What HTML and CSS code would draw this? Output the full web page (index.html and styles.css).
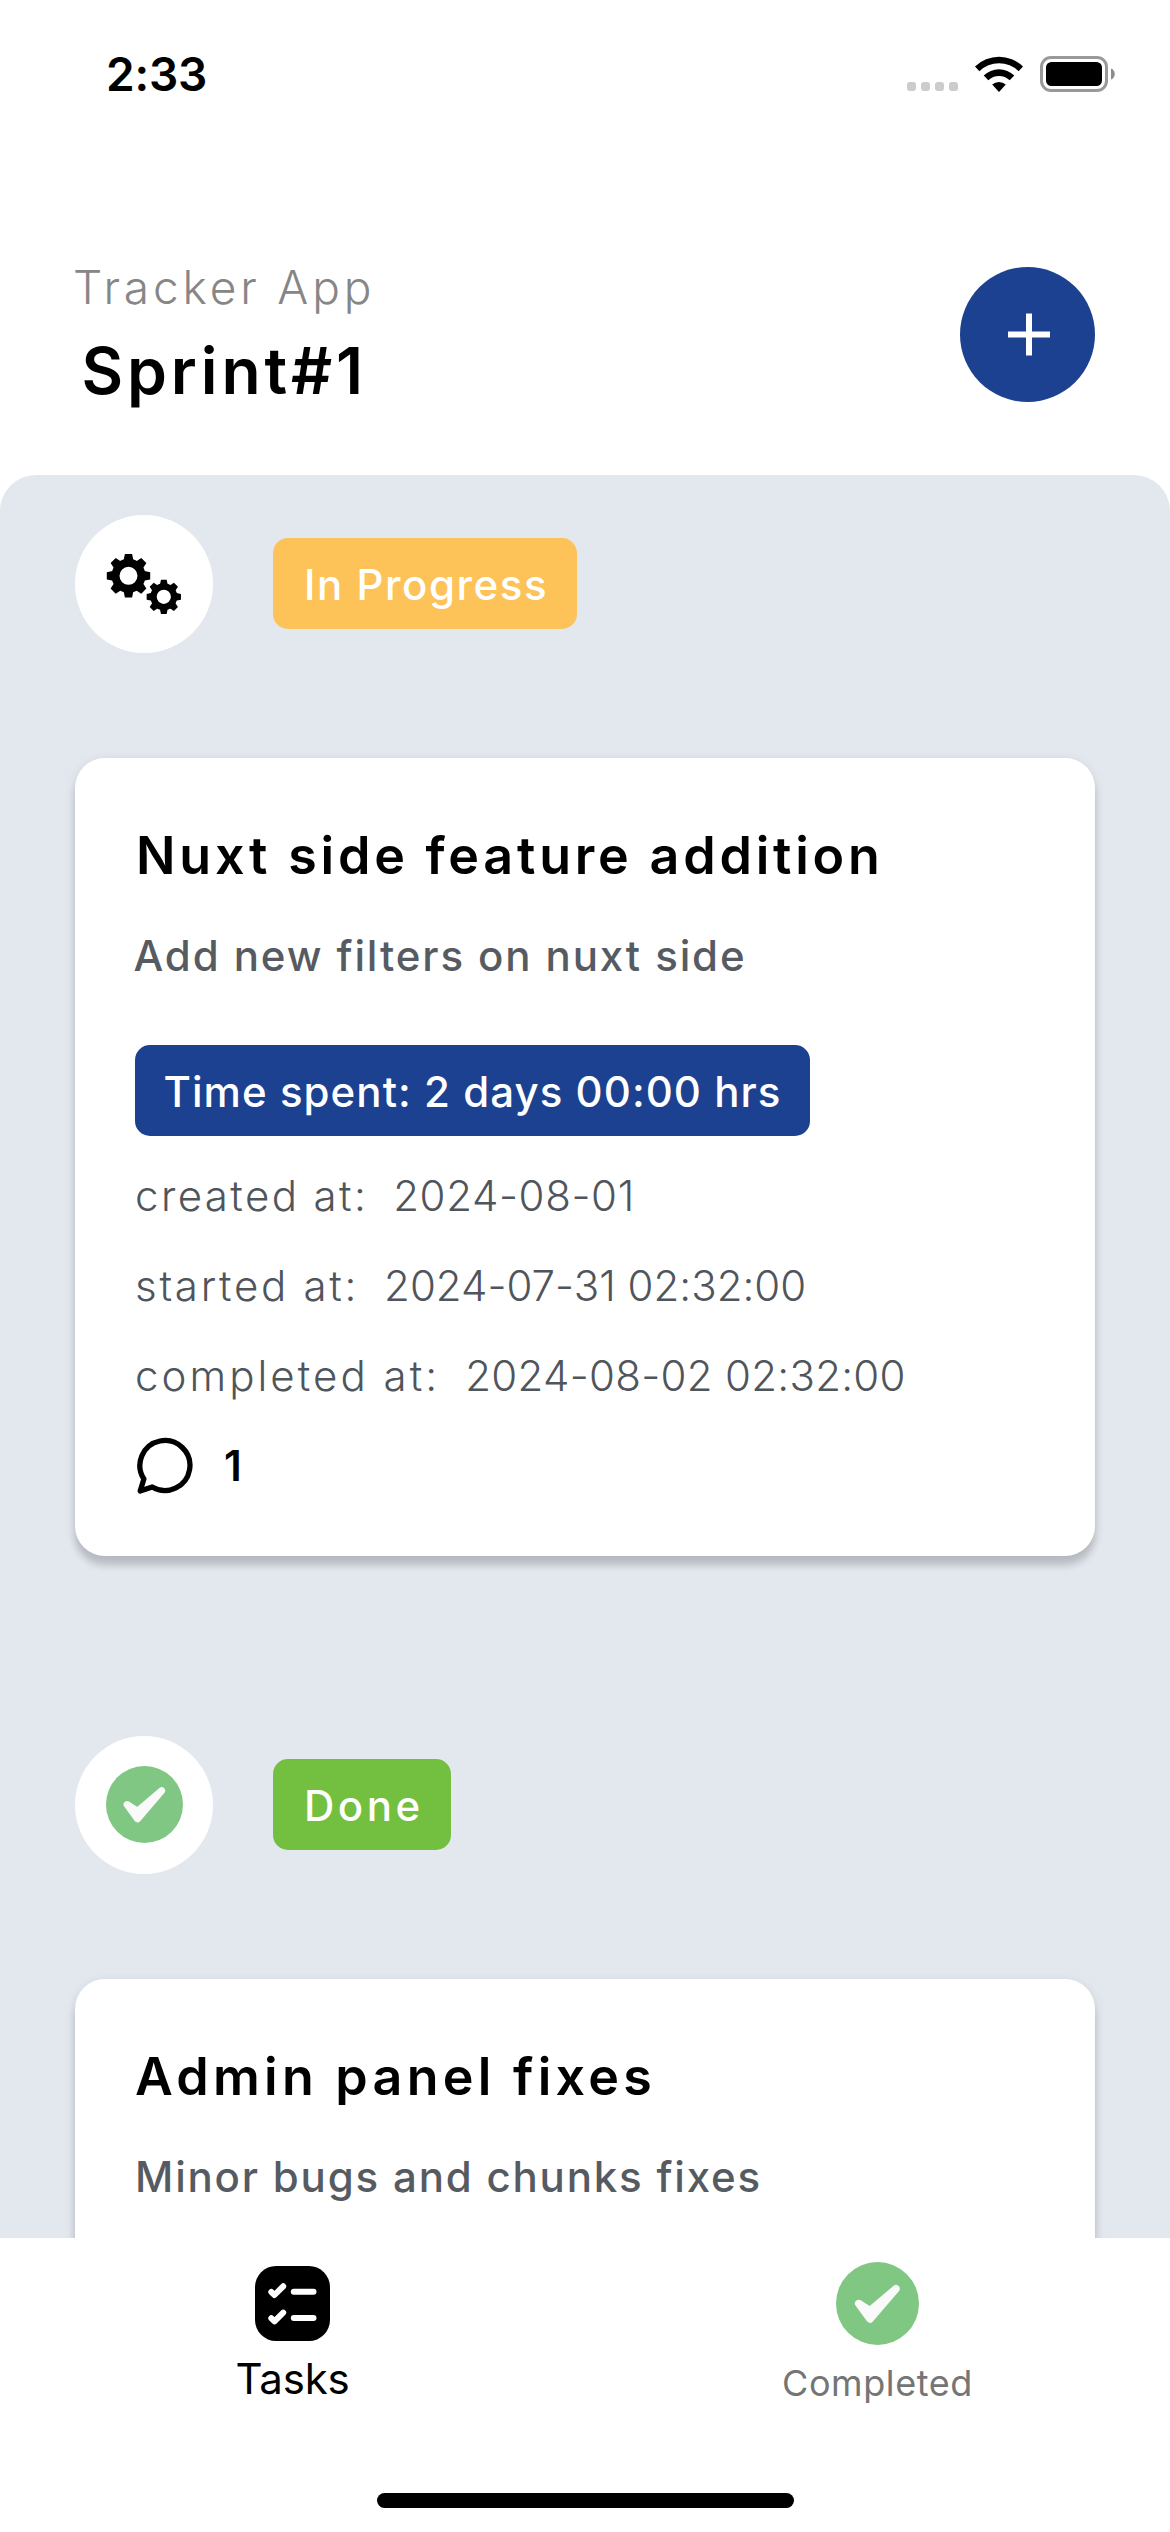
FILE: index.html
```html
<!DOCTYPE html>
<html lang="en">
<head>
<meta charset="utf-8">
<title>Tracker App</title>
<link rel="stylesheet" href="styles.css">
</head>
<body>
<div class="status">
  <span class="status-time">2:33</span>
  <div class="status-icons">
    <div class="dots"><i></i><i></i><i></i><i></i></div>
    <svg class="wifi" viewBox="0 0 48 36">
      <path d="M0 10.5A34.5 34.5 0 0 1 48 10.500L43.600 15.200A28 28 0 0 0 4.400 15.200Z"/>
      <path d="M8.700 19.500A22 22 0 0 1 39.300 19.500L34.700 24.200A15.500 15.500 0 0 0 13.300 24.200Z"/>
      <path d="M17.200 28.600A10 10 0 0 1 30.800 28.600L24 36Z"/>
    </svg>
    <svg class="battery" viewBox="0 0 75 36">
      <rect x="1.500" y="1.500" width="65" height="33" rx="9.500" fill="none" stroke="#999" stroke-width="3"/>
      <rect x="6" y="6" width="56" height="24" rx="5.500"/>
      <path d="M71 12.500C76 14 76 22 71 23.500Z" fill="#8c8c8c"/>
    </svg>
  </div>
</div>

<header class="header">
  <div class="titles">
    <div class="app-name">Tracker App</div>
    <h1 class="sprint">Sprint#1</h1>
  </div>
  <button class="add" aria-label="Add task">
    <svg viewBox="0 0 135 135"><path d="M48 67.500H90M69 46.500V88.500" stroke="#fff" stroke-width="6"/></svg>
  </button>
</header>

<main class="board">
  <section class="group">
    <div class="group-head">
      <div class="group-icon">
        <svg viewBox="0 0 138 138">
          <defs>
            <path id="tooth" d="M-5 -15L-3.600 -21.700H3.600L5 -15Z"/>
            <g id="gear">
              <circle r="13" fill="none" stroke="#000" stroke-width="8"/>
              <use href="#tooth"/>
              <use href="#tooth" transform="rotate(45)"/>
              <use href="#tooth" transform="rotate(90)"/>
              <use href="#tooth" transform="rotate(135)"/>
              <use href="#tooth" transform="rotate(180)"/>
              <use href="#tooth" transform="rotate(225)"/>
              <use href="#tooth" transform="rotate(270)"/>
              <use href="#tooth" transform="rotate(315)"/>
            </g>
          </defs>
          <use href="#gear" transform="translate(53.500 60.800)"/>
          <use href="#gear" transform="translate(88.800 81.800) scale(.79)"/>
        </svg>
      </div>
      <span class="badge progress">In Progress</span>
    </div>
    <article class="card">
      <h2 class="card-title">Nuxt side feature addition</h2>
      <p class="card-text">Add new filters on nuxt side</p>
      <div class="badge spent">Time spent: 2 days 00:00 hrs</div>
      <dl class="dates">
        <div class="row created"><dt>created at:</dt><dd>2024-08-01</dd></div>
        <div class="row started"><dt>started at:</dt><dd>2024-07-31 02:32:00</dd></div>
        <div class="row completed"><dt>completed at:</dt><dd>2024-08-02 02:32:00</dd></div>
      </dl>
      <div class="comments">
        <svg viewBox="0 0 60 60"><path d="M8.900 43A25 25 0 1 1 17.200 51L5.200 55Z" fill="none" stroke="#000" stroke-width="5.300" stroke-linejoin="round"/></svg>
        <span>1</span>
      </div>
    </article>
  </section>

  <section class="group finished">
    <div class="group-head">
      <div class="group-icon">
        <svg class="check" viewBox="0 0 83 83">
          <circle cx="41.500" cy="41.500" r="41.500" fill="#81c784"/>
          <path d="M22.700 41.500L34 48.700L60 26.700L34 57Z" fill="#fafafa" stroke="#fafafa" stroke-width="7.500" stroke-linejoin="round"/>
        </svg>
      </div>
      <span class="badge done">Done</span>
    </div>
    <article class="card">
      <h2 class="card-title">Admin panel fixes</h2>
      <p class="card-text">Minor bugs and chunks fixes</p>
    </article>
  </section>
</main>

<footer class="footer">
  <nav class="tabs">
    <a class="tab active">
      <svg viewBox="0 0 75 75">
        <rect width="75" height="75" rx="21"/>
        <g fill="none" stroke="#fff" stroke-linecap="round" stroke-linejoin="round" stroke-width="6">
          <path d="M38.800 25.800H58.500M38.800 52.100H58.500"/>
          <path d="M16.300 26L19.500 29L28.200 20.300M16.300 52.300L19.500 55.300L28.200 46.600"/>
        </g>
      </svg>
      <span>Tasks</span>
    </a>
    <a class="tab">
      <svg viewBox="0 0 83 83">
        <circle cx="41.500" cy="41.500" r="41.500" fill="#81c784"/>
        <path d="M22.700 41.500L34 48.700L60 26.700L34 57Z" fill="#fafafa" stroke="#fafafa" stroke-width="7.500" stroke-linejoin="round"/>
      </svg>
      <span>Completed</span>
    </a>
  </nav>
  <div class="home-bar"></div>
</footer>
</body>
</html>
```
FILE: styles.css
```css
* { box-sizing: border-box; }

body {
  margin: 0;
  width: 1170px;
  height: 2532px;
  overflow: hidden;
  display: flex;
  flex-direction: column;
  background: #fff;
  color: #000;
  font-family: Inter, sans-serif;
  font-size: 42px;
  font-weight: 500;
}

h1, h2, p, dl, dd { margin: 0; }
svg { display: block; }

/* status bar */
.status {
  flex: none;
  height: 140px;
  padding: 44px 55px 0 106px;
  display: flex;
  justify-content: space-between;
  align-items: flex-start;
}
.status-time {
  font-size: 46px;
  font-weight: 600;
  line-height: 60px;
  letter-spacing: -.2px;
}
.status-icons {
  display: flex;
  align-items: flex-end;
  padding-top: 12px;
}
.dots { display: flex; gap: 5px; padding-bottom: 1px; }
.dots i { width: 9px; height: 9px; border-radius: 3px; background: #ccc; }
.wifi { width: 48px; height: 36px; margin: 0 17px; }
.battery { width: 75px; height: 36px; }

/* page header */
.header {
  flex: none;
  height: 335px;
  padding: 117px 75px 0;
  display: flex;
  justify-content: space-between;
  align-items: flex-start;
}
.app-name {
  margin-left: -2px;
  font-size: 46px;
  font-weight: 300;
  line-height: 60px;
  letter-spacing: 3.85px;
  color: #868686;
}
.sprint {
  margin-top: 9px;
  padding-left: 6.5px;
  font-size: 64px;
  font-weight: 600;
  line-height: 90px;
  letter-spacing: 3.9px;
}
.add {
  width: 135px;
  height: 135px;
  margin-top: 9.5px;
  padding: 0;
  border: 0;
  border-radius: 50%;
  background: #1c4190;
}

/* task board */
.board {
  flex: 1;
  min-height: 0;
  overflow: hidden;
  padding: 39.5px 75px 0;
  border-radius: 36px 36px 0 0;
  background: #e3e8ef;
}
.group { margin-bottom: 180px; }
.group-head {
  display: flex;
  align-items: center;
  gap: 60px;
}
.group-icon {
  width: 138px;
  height: 138px;
  border-radius: 50%;
  background: #fff;
  display: flex;
  align-items: center;
  justify-content: center;
}
.check { width: 77px; height: 77px; }

.badge {
  height: 90.5px;
  padding: 1px 0 0 31px;
  border-radius: 15px;
  line-height: 91px;
  white-space: nowrap;
  color: #fff;
}
.progress { width: 304px; letter-spacing: 1.56px; background: #fdc359; }
.done { width: 178px; letter-spacing: 3.52px; background: #73bf3f; }
.spent { width: 675px; margin-top: 59px; padding-left: 28.5px; letter-spacing: 1.05px; background: #1c4190; }

.card {
  height: 797.5px;
  margin-top: 105.5px;
  padding: 63px 60px 0;
  border-radius: 30px;
  background: #fff;
  box-shadow: 0 10px 7px rgba(0, 0, 0, .14), 0 3px 12px rgba(0, 0, 0, .1);
}
.card-title {
  padding-left: 1px;
  font-size: 52px;
  font-weight: 600;
  line-height: 70px;
  letter-spacing: 3.79px;
}
.card-text {
  margin-top: 35px;
  margin-left: -1.5px;
  line-height: 60px;
  letter-spacing: 1.89px;
  color: #565b62;
}
.finished .card-title { padding-left: 0; letter-spacing: 4.25px; }
.finished .card-text { margin-left: 0; letter-spacing: 1.81px; }

.dates { margin-top: 15px; color: #50555c; font-weight: 300; }
.row { display: flex; line-height: 90px; }
.row dd { margin-left: 25px; }
.created dt { letter-spacing: 2.4px; }
.created dd { letter-spacing: .63px; }
.started dt { letter-spacing: 2.7px; }
.started dd { margin-left: 25px; letter-spacing: .02px; }
.completed dt { letter-spacing: 3.05px; }
.completed dd { letter-spacing: .3px; }

.comments {
  display: flex;
  align-items: center;
  gap: 29px;
  line-height: 90px;
  font-weight: 600;
}
.comments svg { width: 60px; height: 60px; }

/* bottom navigation */
.footer { flex: none; height: 294px; background: #fff; }
.tabs {
  display: grid;
  grid-template-columns: 1fr 1fr;
  height: 255px;
}
.tab {
  display: flex;
  flex-direction: column;
  align-items: center;
  gap: 7.5px;
  padding-top: 24px;
  font-size: 36px;
  font-weight: 400;
  line-height: 60px;
  letter-spacing: .6px;
  color: #757575;
}
.tab svg { width: 83px; height: 83px; }
.tab.active { padding-top: 28px; font-size: 42px; letter-spacing: -.2px; color: #000; }
.tab.active svg { width: 75px; height: 75px; }
.home-bar {
  width: 417px;
  height: 15px;
  margin: 0 auto;
  border-radius: 8px;
  background: #000;
}
```
